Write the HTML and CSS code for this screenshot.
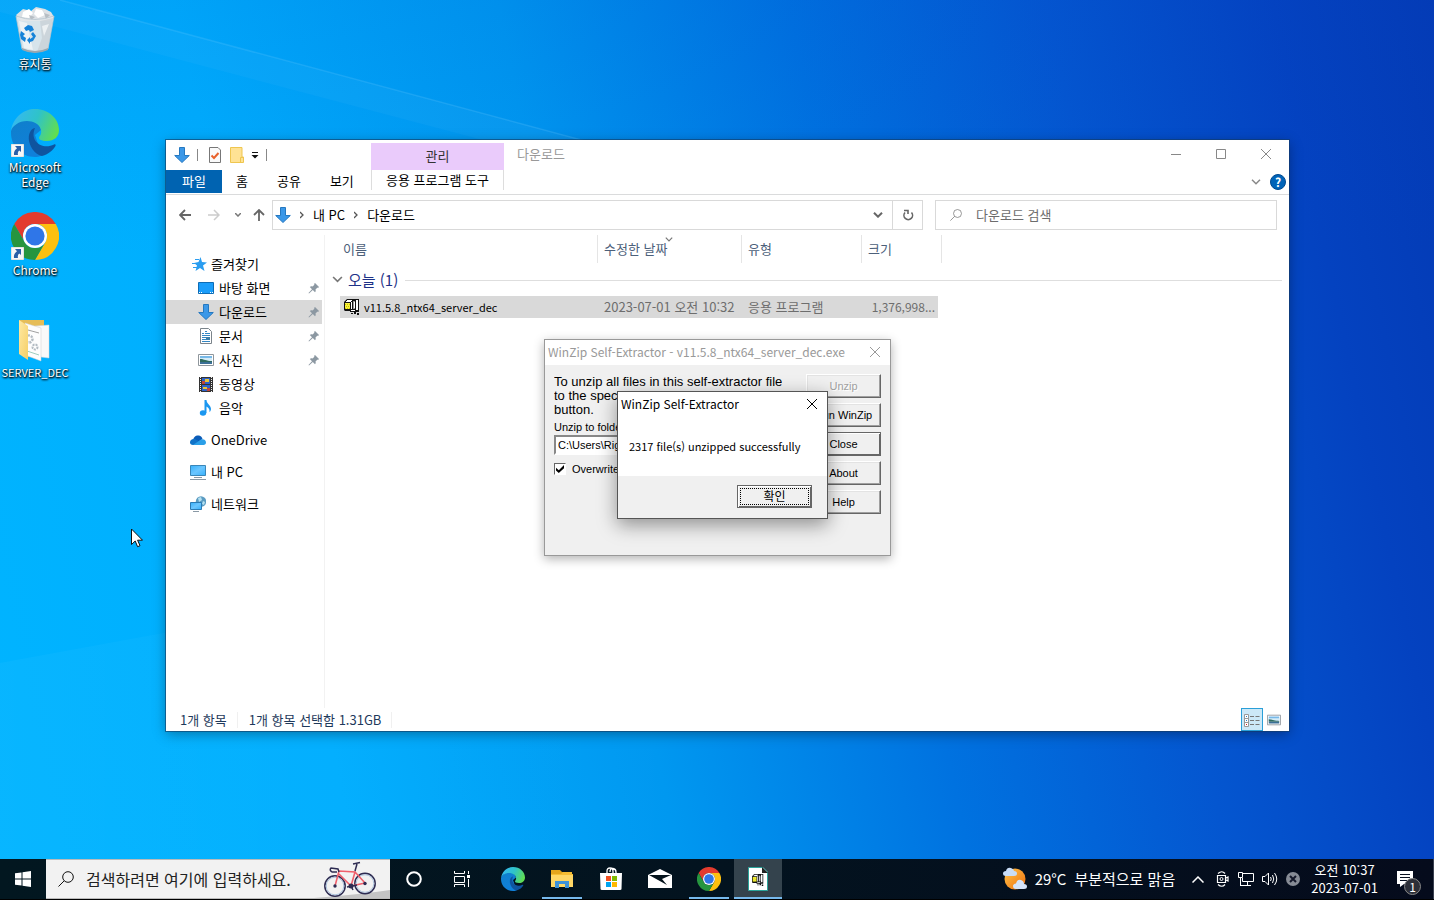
FILE: index.html
```html
<!DOCTYPE html>
<html lang="ko">
<head>
<meta charset="utf-8">
<title>다운로드</title>
<link rel="stylesheet" href="styles.css">
</head>
<body>
<svg class="defs" aria-hidden="true">
  <defs>
    <linearGradient id="edgeTop" x1="0" y1="0.3" x2="1" y2="0.6"><stop offset="0" stop-color="#35b8f4"/><stop offset="0.5" stop-color="#2fc3c8"/><stop offset="1" stop-color="#62de4e"/></linearGradient>
    <linearGradient id="edgeLeft" x1="0" y1="0" x2="0.4" y2="1"><stop offset="0" stop-color="#0f7fcb"/><stop offset="1" stop-color="#1080da"/></linearGradient>
    <linearGradient id="sun" x1="0" y1="0" x2="1" y2="1"><stop offset="0" stop-color="#ffc34a"/><stop offset="1" stop-color="#f0700c"/></linearGradient>
    <linearGradient id="screen" x1="0" y1="0" x2="1" y2="1"><stop offset="0" stop-color="#35b0fb"/><stop offset="0.5" stop-color="#6cc6ff"/><stop offset="1" stop-color="#35b0fb"/></linearGradient>
    <linearGradient id="folder" x1="0" y1="0" x2="1" y2="1"><stop offset="0" stop-color="#ffe9a2"/><stop offset="1" stop-color="#f5cf68"/></linearGradient>
    <linearGradient id="ray"><stop offset="0" stop-color="#fff" stop-opacity=".03"/><stop offset="1" stop-color="#fff" stop-opacity="0"/></linearGradient>
  </defs>
  <symbol id="chrome" viewBox="0 0 48 48">
    <path fill="#e33b2e" d="M24 12H44.8A24 24 0 0 0 3.2 12L13.6 30A12 12 0 0 1 24 12Z"/>
    <path fill="#fdc010" d="M44.8 12H24A12 12 0 0 1 34.4 30L24 48A24 24 0 0 0 44.8 12Z"/>
    <path fill="#26953f" d="M3.2 12A24 24 0 0 0 24 48L34.4 30A12 12 0 0 1 13.6 30Z"/>
    <circle cx="24" cy="24" r="12" fill="#fff"/><circle cx="24" cy="24" r="9.6" fill="#2f76e8"/>
  </symbol>
  <symbol id="edge" viewBox="0 0 48 48">
    <path fill="url(#edgeLeft)" d="M0 22C1 16 8 11 16 11C23 11 29 15 30 21L24 26L31 46.5C28 48 26 48 24 48C10 48 0 37 0 24Z"/>
    <path fill="url(#edgeTop)" d="M0 22C2 8 13 0 24 0C38 0 48 10 48 21C48 28 43 32 36 32C30 32 28 30 28 29C28 27 31 26 30 21C29 15 22 12 16 12C8 12 1 17 0 22Z"/>
    <path fill="#0f549f" d="M24 19C19 20 17 26 18 32C20 41 26 46 31 47C38 45 42 41 44.500 37C45 35.500 44 35 43 35.500C32 41 18 33 24 19Z"/>
  </symbol>
  <symbol id="down" viewBox="0 0 16 16">
    <path fill="#3b98e8" stroke="#2578c0" d="M5.500 .5H10.500V8.500H15.300L8 15.500L.7 8.500H5.500Z"/>
  </symbol>
  <symbol id="zip" viewBox="0 0 16 16">
    <path fill="#111" d="M0 3L3 0H15V12H1L0 11Z"/><path fill="#f6f13c" d="M1 4H6V10H1Z"/><path fill="#fff" d="M3 1H8V2H3ZM2 2H7V3H2ZM7 3H8V10H7Z"/><path fill="#999" d="M9 2H11V10H9Z"/><path fill="#fff" d="M12 1H14V11H12ZM10 3H11V9H10ZM7 11H11V12H7Z"/><path fill="#111" d="M6 12H15V13H6ZM7 14H9V15H7ZM10 13H12V15H10ZM13 14H15V16H13Z"/><path stroke="#c9c100" stroke-dasharray="1 1" d="M1 5.500H6M2 7.500H6M1 9.500H6"/>
  </symbol>
  <symbol id="pin" viewBox="0 0 12 12">
    <path fill="#8c98a2" d="M7 1L11 5L10 6L9.500 5.500L7.500 7.500C8 9 7.600 9.500 7 10.200L4.800 8L1 11.500L.5 11L4 7.200L1.800 5C2.500 4.400 3.500 4 4.700 4.500L6.500 2.500L6 2Z"/>
  </symbol>
  <symbol id="picture" viewBox="0 0 16 12">
    <path fill="#fff" stroke="#8f969c" d="M.5 .5H15.500V11.500H.5Z"/><path fill="#78b9e8" d="M2 2H14V7H2Z"/><path fill="#d5ecf8" d="M2 4H14V7H2Z"/><path fill="#2f6b5e" d="M2 5C6 5 8 7 14 7V8H2Z"/><path fill="#3b6f96" d="M2 8H14V10H2Z"/>
  </symbol>
  <symbol id="close" viewBox="0 0 10 10"><path fill="none" stroke="currentColor" d="M0 0L10 10M10 0L0 10"/></symbol>
  <symbol id="chev" viewBox="0 0 10 6"><path fill="none" stroke="currentColor" stroke-width="1.500" d="M1 .7L5 4.700L9 .7"/></symbol>
  <symbol id="lens" viewBox="0 0 16 16"><circle cx="10" cy="6" r="5.300" fill="none" stroke="currentColor"/><path stroke="currentColor" d="M6.200 9.800L.5 15.500"/></symbol>
  <symbol id="shortcut" viewBox="0 0 13 13"><path fill="#f7f7f7" stroke="#9aa" stroke-width=".5" d="M0 0H13V13H0Z"/><path fill="#2a5fa8" d="M4 2H10V8L8.300 6.500C7 7.500 6.500 9 7 11H3C2.500 8 4 5.500 6 4.200Z"/></symbol>
</svg>

<main class="desktop">
  <svg class="wallpaper-rays" viewBox="0 0 1434 859" preserveAspectRatio="none" aria-hidden="true">
    <path fill="#fff" fill-opacity=".03" d="M60 0L620 150H520L0 12V0Z"/>
    <path stroke="#7fd0ff" stroke-opacity=".18" stroke-width="1.500" d="M60 0L600 145"/>
    <path fill="url(#ray)" d="M0 663L180 630L700 540V859H0Z"/>
  </svg>

  <nav class="shortcuts" aria-label="바탕 화면">
    <a class="shortcut" href="#bin">
      <svg class="shortcut-icon" viewBox="0 0 48 48" aria-hidden="true">
        <path fill="#dce1e5" d="M5 9L12 3L20 5L25 1L34 3L40 6L43 11L38 15H10Z"/><path fill="#fff" d="M12 6L18 3L22 7L18 12L11 11ZM25 3L31 4L34 9L27 12L23 8Z"/><path fill="#b7bec4" d="M18 9L24 11L20 14ZM33 7L39 9L35 13Z"/>
        <path fill="#e3e7ea" fill-opacity=".95" stroke="#b5c4ce" stroke-width=".8" d="M5 10Q24 17 43 10L37 43Q24 49 11 43Z"/><path fill="#c8cfd4" d="M29 15L42 12L37 42L26 46L31 32Z" opacity=".7"/><path fill="#f4f6f7" d="M8 15L16 17L22 44L13 42ZM31 20L38 18L33 30Z" opacity=".8"/>
        <path fill="#9aa7af" d="M11 42Q24 48 37 42V44Q24 50 11 44Z"/>
        <g fill="#1683d8"><path d="M13 22L17 19L21 20L23 24L19 26L18 24L15 25Z"/><path d="M10 25L14 28L12 30L15 32L14 36L10 33L9 29Z"/><path d="M22 26L25 30L22 35L19 36V38L16 34L19 31V33L22 31L20 28Z"/></g>
      </svg>
      <span>휴지통</span>
    </a>
    <a class="shortcut" href="#edge-app">
      <span class="linked"><svg class="shortcut-icon" aria-hidden="true"><use href="#edge"/></svg><svg class="link-mark" aria-hidden="true"><use href="#shortcut"/></svg></span>
      <span>Microsoft Edge</span>
    </a>
    <a class="shortcut" href="#chrome-app">
      <span class="linked"><svg class="shortcut-icon" aria-hidden="true"><use href="#chrome"/></svg><svg class="link-mark" aria-hidden="true"><use href="#shortcut"/></svg></span>
      <span>Chrome</span>
    </a>
    <a class="shortcut long" href="#server">
      <svg class="shortcut-icon" viewBox="0 0 48 48" aria-hidden="true">
        <path fill="#e6bd58" d="M8 5H33V42H12Z"/><path fill="#f9f9f9" stroke="#d4d4d4" stroke-width=".5" d="M24 11L38 10V43L30 42Z"/><path fill="#fdfdfd" stroke="#cfcfcf" stroke-width=".5" d="M14 8L30 13V46L14 40Z"/><path stroke="#888" stroke-width=".8" d="M17 15L28 18"/><circle cx="18" cy="24" r="3.500" fill="none" stroke="#b3bbc2" stroke-width="2.500" stroke-dasharray="2 1"/><circle cx="24" cy="32" r="2.500" fill="none" stroke="#b3bbc2" stroke-width="2" stroke-dasharray="2 1"/><path stroke="#76b9a4" stroke-width=".7" d="M16 36L28 40"/><path fill="url(#folder)" d="M8 5L17 11V45L8 39Z"/>
      </svg>
      <span>SERVER_DEC</span>
    </a>
  </nav>

  <section class="explorer" aria-label="다운로드">
    <header class="ribbon">
      <div class="ribbon-left">
        <div class="quick">
          <svg class="i16" aria-hidden="true"><use href="#down"/></svg>
          <i class="sep"></i>
          <svg class="i16" viewBox="0 0 16 16" aria-hidden="true"><path fill="#fafafa" stroke="#777" d="M2.500 .5H11L13.500 3V15.500H2.500Z"/><path fill="none" stroke="#e8622c" stroke-width="2" d="M4.500 8.500L7 11L11.500 6"/></svg>
          <svg class="i16" viewBox="0 0 16 16" aria-hidden="true"><path fill="#ffe294" stroke="#efc64f" d="M1.500 .5H13V10H14.500V15.500H1.500Z"/><path fill="none" stroke="#efc64f" d="M11.500 15V10.500H14"/></svg>
          <svg class="i8" viewBox="0 0 8 8" aria-hidden="true"><path fill="#111" d="M1 1H7V2H1ZM.5 4H7.500L4 7.500Z"/></svg>
          <i class="sep"></i>
        </div>
        <div class="tabs">
          <button class="tab-file">파일</button><button class="tab">홈</button><button class="tab">공유</button><button class="tab">보기</button>
        </div>
      </div>
      <div class="context">
        <div class="context-name">관리</div>
        <button class="context-tab">응용 프로그램 도구</button>
      </div>
      <div class="ribbon-right">
        <div class="caption">
          <h1 class="window-title">다운로드</h1>
          <button class="win-btn" aria-label="최소화"><svg class="i10" viewBox="0 0 10 10"><path stroke="currentColor" d="M0 5.500H10"/></svg></button>
          <button class="win-btn" aria-label="최대화"><svg class="i10" viewBox="0 0 10 10"><path fill="none" stroke="currentColor" d="M.5 .5H9.500V9.500H.5Z"/></svg></button>
          <button class="win-btn" aria-label="닫기"><svg class="i10"><use href="#close"/></svg></button>
        </div>
        <div class="help-row">
          <svg class="chev" aria-hidden="true"><use href="#chev"/></svg>
          <button class="help" aria-label="도움말">?</button>
        </div>
      </div>
    </header>

    <div class="location">
      <div class="arrows">
        <button class="bare back" aria-label="뒤로"><svg class="i12" viewBox="0 0 12 12"><path fill="none" stroke="#666" stroke-width="1.800" d="M12 6H1.500M6 1L1 6L6 11"/></svg></button>
        <button class="bare" aria-label="앞으로"><svg class="i12" viewBox="0 0 12 12"><path fill="none" stroke="#ccc" stroke-width="1.500" d="M0 6H10.500M6 1L11 6L6 11"/></svg></button>
        <button class="bare recent" aria-label="최근 위치"><svg class="i6" viewBox="0 0 6 4"><path fill="none" stroke="#777" stroke-width="1.500" d="M0 0L3 3L6 0"/></svg></button>
        <button class="bare" aria-label="위로"><svg class="i12" viewBox="0 0 12 12"><path fill="none" stroke="#666" stroke-width="1.800" d="M6 12V1.500M1 6L6 1L11 6"/></svg></button>
      </div>
      <div class="address">
        <svg class="i16" aria-hidden="true"><use href="#down"/></svg>
        <svg class="crumb-sep" viewBox="0 0 4 8" aria-hidden="true"><path fill="none" stroke="#555" stroke-width="1.300" d="M0 1L3 4L0 7"/></svg>
        <a href="#pc">내 PC</a>
        <svg class="crumb-sep" viewBox="0 0 4 8" aria-hidden="true"><path fill="none" stroke="#555" stroke-width="1.300" d="M0 1L3 4L0 7"/></svg>
        <a href="#downloads">다운로드</a>
        <button class="bare drop" aria-label="이전 위치"><svg class="chev" viewBox="0 0 10 6"><path fill="none" stroke="#666" stroke-width="2" d="M1 .7L5 4.700L9 .7"/></svg></button>
        <button class="bare refresh" aria-label="새로 고침"><svg class="i12" viewBox="0 0 12 12"><path fill="none" stroke="#666" stroke-width="1.600" d="M9.500 3.500A4.300 4.300 0 1 1 3 3.500M2 1.500H6V5"/></svg></button>
      </div>
      <label class="find"><svg class="i12" aria-hidden="true"><use href="#lens"/></svg><input type="search" placeholder="다운로드 검색" aria-label="다운로드 검색"></label>
    </div>

    <div class="panes">
      <nav class="tree" aria-label="탐색 창">
        <a class="node" href="#fav"><svg class="i16" viewBox="0 0 16 16"><path fill="#2a9df0" d="M9.500 1L11 6L16 6.500L12 9.500L13.500 15L9 12L4.500 15L6 9.500L3 7L7.500 6Z"/><path stroke="#2a9df0" d="M4 3.500H8M1 7.500H5M2 11.500H6"/></svg>즐겨찾기</a>
        <a class="node sub" href="#desk"><svg class="i16" viewBox="0 0 16 16"><path fill="#1a9dfa" stroke="#0e6cb5" d="M.5 2.500H15.500V13.500H.5Z"/><path stroke="#fff" stroke-dasharray="1 1" d="M1 12.500H4M12 12.500H15"/></svg>바탕 화면<svg class="pin"><use href="#pin"/></svg></a>
        <a class="node sub current" href="#downloads"><svg class="i16"><use href="#down"/></svg>다운로드<svg class="pin"><use href="#pin"/></svg></a>
        <a class="node sub" href="#docs"><svg class="i16" viewBox="0 0 16 16"><path fill="#fff" stroke="#7b848b" d="M2.500 .5H10.500L13.500 3.500V15.500H2.500Z"/><path stroke="#3387c4" d="M4 5.500H6M7 3.500H9M7 5.500H12M4 7.500H12M4 9.500H8M4 11.500H8M4 13.500H12"/><path fill="#3c7ea8" d="M8 9H12V12H8Z"/></svg>문서<svg class="pin"><use href="#pin"/></svg></a>
        <a class="node sub" href="#pics"><svg class="i16"><use href="#picture"/></svg>사진<svg class="pin"><use href="#pin"/></svg></a>
        <a class="node sub" href="#videos"><svg class="i16" viewBox="0 0 16 16"><path fill="#333" d="M1 1H15V16H1Z"/><path stroke="#eee" stroke-dasharray="1 1" d="M2.500 1V16M13.500 1V16"/><path fill="#2e62c8" d="M4 2H12V8H4ZM4 9H12V15H4Z"/><path fill="#e8c534" d="M7 3H11V6H7ZM5 11H9V13H5Z"/><path fill="#c0453a" d="M4 5H7V8H4ZM9 12H12V15H9Z"/></svg>동영상</a>
        <a class="node sub" href="#music"><svg class="i16" viewBox="0 0 16 16"><ellipse cx="5" cy="13" rx="3.200" ry="2.700" fill="#1b97f0"/><path fill="#1b97f0" d="M6.500 0H8.500C8.500 4 13 5 13 9C13 10.500 12 12 11.500 12C12 8 9 7 8.500 6.500V13H6.500Z"/></svg>음악</a>
        <a class="node top" href="#onedrive"><svg class="i16" viewBox="0 0 16 16"><path fill="#0a5cb8" d="M3 9C3 5 6 3 9 3.500C11 4 12 5 12.500 7L8 10Z"/><path fill="#1173c8" d="M0 10.500C0 8 2 6.500 4.500 7L11 10L8 13H3C1 13 0 12 0 10.500Z"/><path fill="#2a9fe8" d="M3 13L11 7.500C14 6.500 16 8.500 16 10.500C16 12 15 13 13.500 13Z"/></svg>OneDrive</a>
        <a class="node top" href="#pc"><svg class="i16" viewBox="0 0 16 16"><path fill="url(#screen)" stroke="#3a86b8" d="M.5 1.500H15.500V11.500H.5Z"/><path stroke="#8a99a5" d="M4 13.500H12M0 15.500H16"/></svg>내 PC</a>
        <a class="node top" href="#net"><svg class="i16" viewBox="0 0 16 16"><circle cx="11" cy="5.500" r="5.200" fill="#5b9cc2"/><path fill="#b5e0f0" d="M8 2L11 1L12 4L9 6ZM13 5L15 6L14 9L12 8Z"/><path fill="url(#screen)" stroke="#2c7cb5" d="M.5 6.500H11.500V13.500H.5Z"/><path stroke="#8a99a5" d="M3 15.500H9"/></svg>네트워크</a>
      </nav>

      <div class="files">
        <table class="list">
          <colgroup><col class="c-name"><col class="c-date"><col class="c-type"><col class="c-size"><col></colgroup>
          <thead><tr><th>이름</th><th><svg class="sort" aria-hidden="true"><use href="#chev"/></svg>수정한 날짜</th><th>유형</th><th>크기</th><th></th></tr></thead>
          <tbody>
            <tr><td class="group" colspan="5"><div class="group-line"><svg class="chev wide" aria-hidden="true"><use href="#chev"/></svg><span>오늘 (1)</span></div></td></tr>
            <tr class="picked"><td><div class="file"><svg class="i16" aria-hidden="true"><use href="#zip"/></svg>v11.5.8_ntx64_server_dec</div></td><td>2023-07-01 오전 10:32</td><td>응용 프로그램</td><td>1,376,998...</td><td></td></tr>
          </tbody>
        </table>
      </div>
    </div>

    <footer class="status">
      <span>1개 항목</span><span>1개 항목 선택함 1.31GB</span>
      <div class="views">
        <button class="view on" aria-label="자세히"><svg class="i16" viewBox="0 0 16 16"><path fill="#fff" stroke="#999" d="M.5 2.500H4.500V14.500H.5ZM.5 6.500H4.500M.5 10.500H4.500"/><path stroke="#777" d="M6 4.500H10M6 8.500H10M6 12.500H10M11.500 4.500H15.500M11.500 8.500H15.500M11.500 12.500H15.500"/><path fill="#2b7fc4" d="M2 4H3V5H2ZM2 8H3V9H2Z"/><path fill="#c22" d="M2 12H3V13H2Z"/></svg></button>
        <button class="view" aria-label="큰 아이콘"><svg class="i14"><use href="#picture"/></svg></button>
      </div>
    </footer>
  </section>

  <section class="dialog extractor" aria-label="WinZip Self-Extractor">
    <header class="dialog-bar"><h2>WinZip Self-Extractor - v11.5.8_ntx64_server_dec.exe</h2><button class="bare" aria-label="닫기"><svg class="i10"><use href="#close"/></svg></button></header>
    <div class="extract-body">
      <form class="extract-form">
        <p class="intro">To unzip all files in this self-extractor file<br>to the specified folder press the Unzip<br>button.</p>
        <label class="folder-label" for="folder">Unzip to folder:</label>
        <input class="folder" id="folder" type="text" value="C:\Users\Rig">
        <label class="over"><input type="checkbox" checked>Overwrite</label>
      </form>
      <div class="actions">
        <button class="classic" disabled>Unzip</button>
        <button class="classic">Run WinZip</button>
        <button class="classic strong">Close</button>
        <button class="classic">About</button>
        <button class="classic">Help</button>
      </div>
    </div>
  </section>

  <section class="dialog message" role="alertdialog" aria-label="WinZip Self-Extractor">
    <header class="dialog-bar"><h2>WinZip Self-Extractor</h2><button class="bare" aria-label="닫기"><svg class="i10"><use href="#close"/></svg></button></header>
    <p class="message-text">2317 file(s) unzipped successfully</p>
    <footer class="message-foot"><button class="classic ok"><span>확인</span></button></footer>
  </section>

  <svg class="cursor" viewBox="0 0 12 20" aria-hidden="true"><path fill="#fff" stroke="#111" d="M.5 1V16.500L4.200 13L6.600 18.700L9 17.700L6.600 12.200H11.500Z"/></svg>
</main>

<footer class="taskbar">
  <button class="start" aria-label="시작"><svg class="i16" viewBox="0 0 16 16"><path fill="#fff" d="M0 2.300L6.500 1.400V7.500H0ZM7.500 1.200L16 0V7.500H7.500ZM0 8.500H6.500V14.600L0 13.700ZM7.500 8.500H16V16L7.500 14.800Z"/></svg></button>
  <label class="search">
    <svg class="i16" aria-hidden="true"><use href="#lens"/></svg>
    <input type="search" placeholder="검색하려면 여기에 입력하세요." aria-label="검색">
    <svg class="bike" viewBox="0 0 76 38" aria-hidden="true">
      <path fill="#c4c4c4" d="M0 38Q50 34 76 30V38Z"/>
      <g fill="none" stroke="#2e2c52" stroke-width="1.500"><circle cx="21" cy="26" r="10.200"/><circle cx="51" cy="23.500" r="10.200"/></g>
      <g fill="none" stroke="#9ab8d8" stroke-width=".8"><circle cx="21" cy="26" r="8.800"/><circle cx="51" cy="23.500" r="8.800"/></g>
      <path fill="none" stroke="#f0606c" stroke-width="1.600" d="M21 26L25 11L41 12L37 26L25 14M41 12L51 23L37 26"/>
      <path fill="none" stroke="#2e2c52" stroke-width="1.500" d="M25 12L24 9L17 8Q15 10 18 12L23 12M41 11L43 4M39 4L46 2.500M33 27L43 25M37 26L39 30"/>
      <g fill="#2e2c52"><circle cx="37" cy="26" r="2.500"/><circle cx="21" cy="26" r="1.700"/><circle cx="51" cy="23.500" r="1.700"/></g>
    </svg>
  </label>
  <button class="task" aria-label="Cortana"><svg class="i16" viewBox="0 0 16 16"><circle cx="8" cy="8" r="6.800" fill="none" stroke="#fff" stroke-width="2"/></svg></button>
  <button class="task" aria-label="작업 보기"><svg class="i16" viewBox="0 0 16 16"><path fill="none" stroke="#fff" d="M.5 0V2.500H10.500V0M.5 5.500H10.500V11.500H.5ZM.5 16V13.500H10.500V16M14.500 0V3M14.500 8V16"/><path fill="#fff" d="M13 4H16V7H13Z"/></svg></button>
  <div class="apps">
    <button class="task" aria-label="Edge"><svg class="i24"><use href="#edge"/></svg></button>
    <button class="task open" aria-label="파일 탐색기"><svg class="i24" viewBox="0 0 24 24"><path fill="#e4a51c" d="M1 3H10L12 5H22V10H1Z"/><path fill="#ffd766" d="M1 7H23V20H1Z"/><path fill="#f6bd33" d="M1 7H11L13 5H22V7H23V8H1Z"/><path fill="#3f93d8" d="M5 21V14H19V21H15V17H9V21Z"/></svg></button>
    <button class="task" aria-label="Store"><svg class="i24" viewBox="0 0 24 24"><path fill="none" stroke="#fff" stroke-width="1.300" d="M8 7V4Q8 1 11 1Q14 1 14 4V7M11 5Q11 1 14 1.500Q17 2 17 5V7"/><path fill="#fff" d="M1 6H23L22.500 22Q22.500 23 21 23H3Q1.500 23 1.500 22Z"/><path fill="#f25022" d="M7 9H12V14H7Z"/><path fill="#7fba00" d="M13 9H18V14H13Z"/><path fill="#00a4ef" d="M7 15H12V20H7Z"/><path fill="#ffb900" d="M13 15H18V20H13Z"/></svg></button>
    <button class="task" aria-label="메일"><svg class="i24" viewBox="0 0 24 24"><path fill="#fff" d="M0 8L12 2L24 8V21H0Z"/><path fill="#04131c" d="M1 8H23L14 12L19 18L10 13Z"/></svg></button>
    <button class="task open" aria-label="Chrome"><svg class="i24"><use href="#chrome"/></svg></button>
    <button class="task open active" aria-label="WinZip"><svg class="i24" viewBox="0 0 24 24"><path fill="#fff" stroke="#2aa39a" d="M2.500 .5H17L21.500 5V23.500H2.500Z"/><path fill="#222" d="M16 0L22 6H16Z"/><use href="#zip" x="6" y="7" width="12" height="12"/></svg></button>
  </div>
  <div class="tray">
    <button class="weather"><svg class="i24" viewBox="0 0 24 24" aria-hidden="true"><circle cx="12" cy="12" r="10.500" fill="url(#sun)"/><path fill="#c9ddf8" d="M3 9Q0 9 0 6.500Q0 4 3 4Q4 0 8 1Q11 2 11 4Q14 4 14 6.500Q14 9 11 9Z"/><path fill="#d4e4fb" d="M13 22Q10 22 10 19Q10 17 13 16.500Q14 12 18 13Q21 14 21 17Q24 17 24 19.500Q24 22 21 22Z"/></svg><span>29°C</span><span>부분적으로 맑음</span></button>
    <svg class="tray-chev" viewBox="0 0 12 7" aria-hidden="true"><path fill="none" stroke="#fff" stroke-width="1.500" d="M.5 6.500L6 1L11.500 6.500"/></svg>
    <svg class="i16" viewBox="0 0 16 16" aria-hidden="true"><path fill="none" stroke="#fff" stroke-width="1.200" d="M3.500 4.500H11.500V11.500H3.500ZM12 7L14 6V10L12 9M4 2.500Q8 -1 11 2.500M4 13.500Q8 17 11 13.500"/><circle cx="7.500" cy="8" r="1.500" fill="none" stroke="#fff"/></svg>
    <svg class="i16" viewBox="0 0 16 16" aria-hidden="true"><path fill="none" stroke="#fff" d="M5 2.500H15.500V10.500H4.500V7M.5 1.500H4.500V6.500H.5ZM2.500 6.500V14.500M9.500 10.500V14M2 14.500H13"/></svg>
    <svg class="i16" viewBox="0 0 16 16" aria-hidden="true"><path fill="none" stroke="#fff" d="M.5 5.500H3L6.500 2V14L3 10.500H.5ZM8.500 6Q10 8 8.500 10M10.500 4Q13 8 10.500 12M12.500 2Q17 8 12.500 14"/></svg>
    <svg class="i14" viewBox="0 0 14 14" aria-hidden="true"><circle cx="7" cy="7" r="7" fill="#868b95"/><path stroke="#14182a" stroke-width="2" d="M4 4L10 10M10 4L4 10"/></svg>
    <time class="clock">오전 10:37<br>2023-07-01</time>
    <button class="notes" aria-label="알림"><svg viewBox="0 0 24 24"><path fill="#fff" d="M0 0H16V13H7L3 16V13H0Z"/><path stroke="#081020" d="M3 3.500H13M3 6.500H13M3 9.500H10"/></svg><span class="badge">1</span></button>
  </div>
</footer>
</body>
</html>
```
FILE: styles.css
```css
* { box-sizing: border-box; }

body {
  margin: 0;
  height: 100vh;
  display: flex;
  flex-direction: column;
  overflow: hidden;
  font: 13px/18px "Noto Sans CJK KR", sans-serif;
  color: #000;
}

button, input { font: inherit; color: inherit; }
button { border: 0; padding: 0; background: none; }
a { color: inherit; text-decoration: none; }
h1, h2, p { margin: 0; font: inherit; }
svg { display: block; flex: none; }

.defs { position: absolute; width: 0; height: 0; }
.i6 { width: 6px; height: 4px; }
.i8 { width: 8px; height: 8px; }
.i10 { width: 10px; height: 10px; overflow: visible; }
.i12 { width: 12px; height: 12px; }
.i14 { width: 14px; height: 14px; }
.i16 { width: 16px; height: 16px; }
.i24 { width: 24px; height: 24px; }
.chev { width: 10px; height: 6px; }
.bare { display: grid; place-items: center; }

/* Desktop */
.desktop {
  position: relative;
  flex: 1;
  min-height: 0;
  background:
    linear-gradient(to bottom, rgba(0, 70, 200, 0.1), rgba(0, 70, 200, 0) 30%),
    linear-gradient(78deg, #00b4ff 0%, #00aefe 22%, #0098f0 42%, #0072e0 60%, #0456d0 76%, #0442c0 90%, #043ab4 100%);
}
.wallpaper-rays { position: absolute; inset: 0; width: 100%; height: 100%; }

.shortcuts { position: relative; width: 70px; padding-top: 6px; }
.shortcut {
  display: flex;
  flex-direction: column;
  align-items: center;
  gap: 2px;
  height: 103px;
  color: #fff;
  font-size: 12px;
  line-height: 15px;
  text-align: center;
  text-shadow: 0 1px 2px #000, 1px 1px 2px #000;
}
.long { font-size: 11px; }
.shortcut-icon { width: 48px; height: 48px; }
.linked { position: relative; }
.link-mark { position: absolute; left: 0; bottom: 0; width: 13px; height: 13px; }

/* Explorer window */
.explorer {
  position: absolute;
  inset: 140px 145px 128px 166px;
  display: flex;
  flex-direction: column;
  background: #fff;
  box-shadow: 0 0 0 1px rgba(20, 60, 100, 0.6), 0 3px 12px rgba(0, 0, 0, 0.35);
}
.ribbon { display: flex; border-bottom: 1px solid #dadbdc; }
.ribbon-left { width: 205px; }
.quick { display: flex; align-items: center; height: 30px; padding-left: 8px; gap: 6px; }
.sep { width: 1px; height: 12px; margin: 0 3px 0 1px; background: #888; }
.tabs { display: flex; height: 24px; gap: 29px; padding-bottom: 1px; }
.tabs button { padding-bottom: 2px; }
.tab-file { width: 56px; margin-right: -15px; background: #0063b1; color: #fff; }
.context { width: 133px; padding-top: 3px; text-align: center; }
.context-name { height: 27px; line-height: 26px; background: #eacbfb; color: #333; }
.context-tab { width: 100%; height: 20px; border: solid #ddd; border-width: 0 1px; }
.ribbon-right { flex: 1; }
.caption { display: flex; height: 30px; align-items: center; padding: 0 1px 2px 0; color: #999; }
.window-title { flex: 1; padding-left: 13px; }
.win-btn { width: 45px; height: 28px; display: grid; place-items: center; color: #888; }
.help-row { display: flex; height: 24px; justify-content: flex-end; align-items: center; gap: 9px; padding-right: 3px; color: #888; }
.help { width: 16px; height: 16px; border-radius: 50%; background: #0063b8; border: 1px solid #004a90; color: #fff; font-size: 12px; line-height: 14px; font-weight: 700; }

.location { display: grid; grid-template-columns: 106px minmax(0, 651fr) minmax(0, 354fr); align-items: center; height: 40px; padding-right: 12px; }
.arrows { display: flex; align-items: center; padding-left: 13px; gap: 15px; }
.back { margin-right: 2px; }
.recent { margin-right: -3px; }
.address { display: flex; align-items: center; height: 30px; border: 1px solid #d9d9d9; padding-left: 2px; gap: 9px; }
.crumb-sep { width: 4px; height: 8px; }
.drop { margin-left: auto; }
.refresh { width: 30px; height: 28px; border-left: 1px solid #d9d9d9; }
.find { display: flex; align-items: center; height: 30px; margin-left: 12px; border: 1px solid #d9d9d9; padding-left: 14px; gap: 14px; color: #777; }
.find input { flex: 1; min-width: 0; border: 0; padding: 0; background: none; outline: 0; }
.find input::placeholder { color: #6d6d6d; }

.panes { flex: 1; min-height: 0; display: flex; }
.tree { width: 159px; border-right: 1px solid #f2f2f2; padding-top: 17px; }
.node { display: flex; align-items: center; height: 24px; padding-left: 25px; gap: 4px; margin-right: 2px; }
.node.sub { padding-left: 32px; gap: 5px; }
.node.top { margin-top: 8px; padding-left: 24px; gap: 5px; }
.current { background: #d9d9d9; }
.pin { width: 12px; height: 12px; margin-left: auto; margin-right: 2px; }

.files { flex: 1; padding-left: 5px; padding-right: 7px; }
.list { width: 100%; table-layout: fixed; border-collapse: separate; border-spacing: 0; }
.c-name { width: 268px; }
.c-date { width: 144px; }
.c-type { width: 120px; }
.c-size { width: 80px; }
.list th { position: relative; height: 28px; padding: 0 6px; border-right: 1px solid #e5e5e5; color: #4c607a; font-weight: 400; text-align: left; }
.list th:first-child { padding-left: 13px; }
.list th:last-child { border-right: 0; }
.sort { position: absolute; left: 67px; top: 2px; width: 8px; height: 5px; color: #777; }
.list td { padding: 0 6px; white-space: nowrap; }
.list td.group { height: 33px; padding: 0; }
.group-line { display: flex; align-items: center; gap: 5px; color: #1e3287; font-size: 15px; padding-left: 2px; }
.group-line::after { content: ""; flex: 1; height: 1px; background: #dedede; margin: 2px 0 0 2px; }
.wide { width: 11px; height: 7px; color: #777; }
.picked td { height: 22px; line-height: 22px; background: #d9d9d9; color: #6d6d6d; }
.picked td:first-child { padding-left: 4px; border-left: 10px solid #fff; color: #000; }
.picked td:nth-child(4) { padding: 0 3px; border-right: 4px solid #fff; font-size: 12px; text-align: right; }
.picked td:last-child { background: none; }
.file { display: flex; align-items: center; gap: 4px; font-size: 11px; }

.status { display: flex; align-items: center; height: 23px; padding-left: 14px; color: #1e395b; }
.status span { padding-right: 10px; border-right: 1px solid #f0f0f0; margin-right: 11px; line-height: 16px; }
.views { margin-left: auto; display: flex; padding-right: 4px; }
.view { width: 22px; height: 23px; display: grid; place-items: center; }
.view.on { background: #cce8f7; border: 1px solid #2a9fd8; }

/* Dialogs */
.dialog { position: absolute; display: flex; flex-direction: column; background: #f0f0f0; font-size: 12px; }
.dialog-bar { display: flex; align-items: center; justify-content: space-between; height: 25px; padding: 0 10px 2px 3px; background: #fff; }
.extractor { left: 544px; top: 339px; width: 347px; height: 217px; border: 1px solid #999; box-shadow: 0 3px 10px rgba(0, 0, 0, 0.3); }
.extractor .dialog-bar { color: #999; }
.extract-body { display: flex; justify-content: space-between; padding: 9px; font: 11px/14px "Liberation Sans", Arial, sans-serif; }
.extract-form { display: flex; flex-direction: column; align-items: flex-start; width: 246px; }
.intro { height: 40px; padding-top: 1px; overflow: hidden; font-size: 13px; white-space: nowrap; }
.folder-label { margin-top: 6px; }
.folder { width: 160px; height: 20px; margin-top: 1px; padding: 0 2px; border: 2px solid #888; border-right-color: #fff; border-bottom-color: #fff; background: #fff; }
.over { display: flex; align-items: center; gap: 6px; margin-top: 7px; }
.over input { appearance: none; display: grid; width: 12px; height: 12px; margin: 0; border: 1px solid; border-color: #666 #fff #fff #666; background: #fff; }
.over input:checked::after { content: ""; margin: 1px; background: #000; clip-path: polygon(0 35%, 35% 65%, 100% 0, 100% 40%, 35% 100%, 0 70%); }
.actions { display: flex; flex-direction: column; gap: 5px; }
.classic {
  width: 75px;
  height: 24px;
  border: 1px solid;
  border-color: #fff #666 #666 #fff;
  box-shadow: inset -1px -1px 0 #a0a0a0, inset 1px 1px 0 #e3e3e3;
  background: #f0f0f0;
}
.classic:disabled { color: #a0a0a0; text-shadow: 1px 1px 0 #fff; }
.strong { border-color: #666; box-shadow: inset 1px 1px 0 #fff, inset -1px -1px 0 #666; }

.message { left: 617px; top: 391px; width: 211px; height: 128px; border: 1px solid #555; box-shadow: 0 6px 18px rgba(0, 0, 0, 0.4); }
.message-text { flex: 1; padding: 20px 11px 0; background: #fff; font-size: 11px; }
.message-foot { display: flex; justify-content: flex-end; height: 42px; padding: 9px 15px; }
.ok { height: 23px; padding: 2px; border-color: #666; box-shadow: inset 1px 1px 0 #fff, inset -1px -1px 0 #666; }
.ok span { display: block; height: 17px; line-height: 13px; border: 1px dotted #000; }

.cursor { position: absolute; left: 131px; top: 528px; width: 12px; height: 20px; }

/* Taskbar */
.taskbar { display: flex; height: 41px; border-bottom: 1px solid #000; background: linear-gradient(to right, #021720, #03131f 50%, #050b1c); color: #fff; }
.start { width: 46px; display: grid; place-items: center; }
.search { display: flex; align-items: center; width: 344px; padding-left: 12px; gap: 12px; background: #f2f2f2; border: 1px solid #bbb; border-width: 1px 0; color: #111; }
.search input { flex: 1; min-width: 0; border: 0; padding: 0; background: none; outline: 0; font-size: 16px; }
.search input::placeholder { color: #222; }
.bike { width: 76px; height: 38px; margin-left: -12px; }
.task { position: relative; width: 48px; display: grid; place-items: center; }
.apps { display: flex; margin-left: 2px; }
.apps .task { width: 49px; }
.apps .active { width: 48px; margin-left: 1px; background: #34434d; }
.open::after { content: ""; position: absolute; left: 5px; right: 4px; bottom: 0; height: 2px; background: #76b9ed; }
.active::after { left: 0; right: 0; }
.tray { display: flex; align-items: center; margin-left: auto; gap: 8px; border-right: 1px solid #3a4050; }
.weather { display: flex; align-items: center; gap: 8px; margin-right: 9px; font-size: 15px; }
.tray-chev { width: 12px; height: 7px; margin-right: 2px; }
.clock { margin-left: 3px; text-align: center; }
.notes { position: relative; width: 24px; height: 24px; margin: 7px 12px 0 11px; }
.badge { position: absolute; right: 0; bottom: 0; width: 17px; height: 17px; border: 1px solid #888; border-radius: 50%; background: #2c2f38; font-size: 12px; line-height: 15px; }
```
